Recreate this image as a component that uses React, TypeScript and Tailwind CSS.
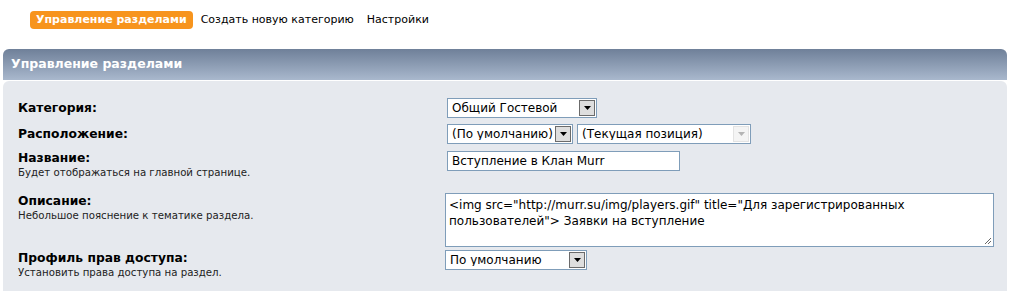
import type { ReactNode } from "react";

const font = { fontFamily: "'DejaVu Sans', Verdana, sans-serif" };

function Arrow({ disabled = false }: { disabled?: boolean }) {
  return (
    <span
      className={
        disabled
          ? "flex h-[16px] w-[16px] items-center justify-center border border-[#e3e3e3] bg-[#f4f4f4]"
          : "flex h-[16px] w-[16px] items-center justify-center border border-[#6b6b6b] bg-[#dedede]"
      }
    >
      <svg width="7" height="4" viewBox="0 0 7 4">
        <path d="M0 0h7L3.5 4z" fill={disabled ? "#b4b4b4" : "#000"} />
      </svg>
    </span>
  );
}

function Select({
  value,
  width,
  disabled = false,
}: {
  value: string;
  width: string;
  disabled?: boolean;
}) {
  return (
    <div
      className={`flex h-[20px] items-center justify-between border border-[#7f9db9] bg-white pl-[4px] pr-[1px] text-[12px] text-black ${width}`}
    >
      <span className="truncate leading-none">{value}</span>
      <Arrow disabled={disabled} />
    </div>
  );
}

function Row({
  label,
  hint,
  children,
  className = "",
}: {
  label: string;
  hint?: string;
  children: ReactNode;
  className?: string;
}) {
  return (
    <div className={`flex ${className}`}>
      <div className="w-[427px] shrink-0">
        <div className="text-[12.3px] font-bold leading-[16px] text-black">{label}</div>
        {hint && <div className="text-[10.2px] leading-[14px] text-[#222]">{hint}</div>}
      </div>
      {children}
    </div>
  );
}

export default function App() {
  return (
    <div className="h-[291px] w-[1017px] overflow-hidden bg-white" style={font}>
      <nav className="flex items-center gap-[8px] pl-[30px] pt-[11px] text-[11px]">
        <span className="rounded-[4px] bg-[#f7941d] px-[6px] py-[2px] font-bold leading-[14px] text-white">
          Управление разделами
        </span>
        <span className="text-black">Создать новую категорию</span>
        <span className="ml-[5px] text-black">Настройки</span>
      </nav>

      <div className="mx-[3px] mt-[20px] w-[1004px]">
        <div className="flex h-[31px] items-center rounded-t-[6px] bg-gradient-to-b from-[#6f8099] to-[#a9b8cd] pl-[8px] text-[12.5px] font-bold text-white">
          Управление разделами
        </div>
        <div className="mt-[1px] h-[220px] rounded-t-[6px] bg-[#e6e9ee] pl-[15px] pt-[17px]">
          <Row label="Категория:" className="items-center">
            <div className="ml-[2px]">
              <Select value="Общий Гостевой" width="w-[150px]" />
            </div>
          </Row>

          <Row label="Расположение:" className="mt-[6px] items-center">
            <div className="ml-[2px] flex gap-[4px]">
              <Select value="(По умолчанию)" width="w-[126px]" />
              <Select value="(Текущая позиция)" width="w-[174px]" disabled />
            </div>
          </Row>

          <Row label="Название:" hint="Будет отображаться на главной странице." className="mt-[6px]">
            <div className="ml-[2px] mt-[1px] flex h-[20px] w-[233px] items-center border border-[#7f9db9] bg-white pl-[4px] text-[12px] text-black">
              Вступление в Клан Murr
            </div>
          </Row>

          <Row label="Описание:" hint="Небольшое пояснение к тематике раздела." className="mt-[13px]">
            <div className="relative h-[54px] w-[549px] border border-[#7f9db9] bg-white px-[3px] pt-[3px] text-[12px] leading-[16px] text-black">
              &lt;img src="http://murr.su/img/players.gif" title="Для зарегистрированных
              <br />
              пользователей"&gt; Заявки на вступление
              <svg className="absolute bottom-[1px] right-[1px]" width="9" height="9" viewBox="0 0 9 9">
                <path d="M8 2L2 8M8 5L5 8" stroke="#666" strokeWidth="1" />
              </svg>
            </div>
          </Row>

          <Row label="Профиль прав доступа:" hint="Установить права доступа на раздел." className="mt-[3px]">
            <div>
              <Select value="По умолчанию" width="w-[142px]" />
            </div>
          </Row>
        </div>
      </div>
    </div>
  );
}
